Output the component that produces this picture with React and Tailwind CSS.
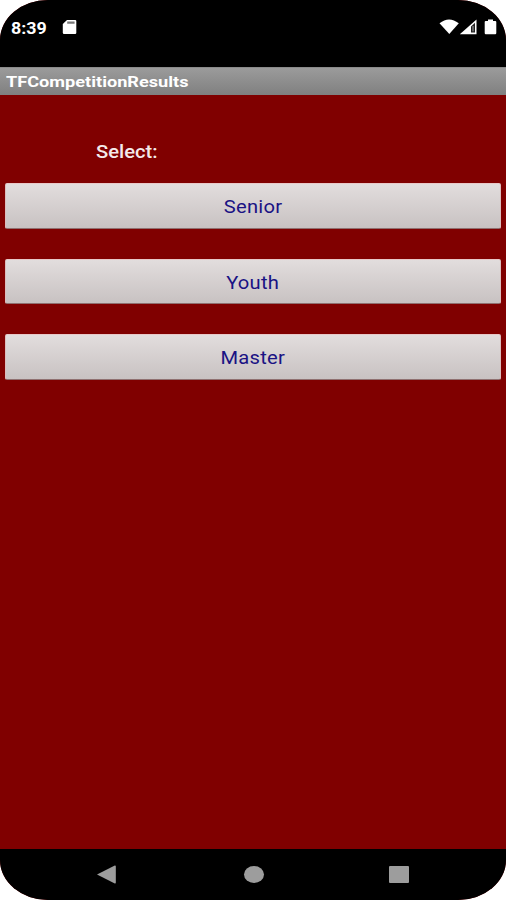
import React from "react";

const categories = ["Senior", "Youth", "Master"];

const StatusBar = () => {
  return (
    <div className="flex h-[67px] shrink-0 items-start justify-between bg-black pl-[11px] pr-[9px] pt-[18px] text-white">
      <div className="flex items-start">
        <span className="w-[51px] origin-left scale-x-[1.05] whitespace-nowrap text-[17px] font-bold leading-[20px]">8:39</span>
        <svg width="15" height="16" viewBox="0 0 15 16" className="mt-px">
          <path d="M5 1H13.2Q14.3 1 14.3 2V13.8Q14.3 15 13.2 15H2Q.8 15 .8 13.8V5Z" fill="#fff" />
          <path d="M5.2 3.6H12.6" stroke="#777" strokeWidth="2.4" />
        </svg>
      </div>

      <svg width="58" height="18" viewBox="0 0 58 18" fill="#fff">
        {/* wifi */}
        <path d="M.5 5.2Q10 -2.4 19.8 5.2L10.3 16Z" />
        {/* signal */}
        <path d="M37.5 1.5V16.2H20.8Z" />
        <path d="M32 8.4L36 4.8V14.4H32Z" fill="#222" />
        <path d="M34 8V13.4" stroke="#aaa" strokeWidth="1" />
        {/* battery */}
        <path d="M49 1.5H54V3H56.2Q57.3 3 57.3 4V15Q57.3 16.2 56.2 16.2H46.8Q45.7 16.2 45.7 15V4Q45.7 3 46.8 3H49Z" />
      </svg>
    </div>
  );
};

const NavBar = () => {
  return (
    <div className="flex h-[51px] shrink-0 items-center bg-black pl-[96px]">
      <svg width="20" height="20" viewBox="0 0 20 20" fill="#9d9d9d">
        <path d="M1 9.5L18.8 .6Q19.8 .4 19.8 1.5V17.5Q19.8 18.8 18.8 18.4Z" />
      </svg>
      <div className="ml-[128px] h-[17px] w-[20px] rounded-[50%] bg-[#9d9d9d]" />
      <div className="ml-[125px] h-[17px] w-[20px] rounded-[1px] bg-[#9d9d9d]" />
    </div>
  );
};

const App = () => {
  return (
    <div className="h-[900px] w-[506px] bg-white font-['Roboto',sans-serif]">
      <div className="flex h-full flex-col overflow-hidden rounded-[48px/40px] bg-[#800000]">
        <StatusBar />

        <div className="flex h-[28px] shrink-0 items-center border-t border-[#8a8a8a] bg-linear-to-b from-[#9b9b9b] to-[#808080] pl-[6px]">
          <h1 className="origin-left scale-x-[1.21] whitespace-nowrap text-[15px] font-bold leading-[20px] text-white">
            TFCompetitionResults
          </h1>
        </div>

        <main className="flex-1 px-[5px] pt-[46px]">
          <p className="ml-[91px] h-[42px] w-[80px] origin-left scale-x-[1.12] text-[18px] font-medium leading-[21px] text-[#f4eaea]">
            Select:
          </p>

          <div className="flex flex-col gap-[30px]">
            {categories.map((category) => (
              <button
                key={category}
                className="flex h-[45.5px] w-full items-center justify-center rounded-[2px] border border-t-[#e8c8c8] border-x-[#dcbcbc] border-b-[#8f7070] bg-linear-to-b from-[#e2dddd] to-[#c8c2c2] pt-[3px] text-[#1a1384]"
              >
                <span className="scale-x-[1.12] text-[18px] leading-[20px] tracking-[0.2px]">{category}</span>
              </button>
            ))}
          </div>
        </main>

        <NavBar />
      </div>
    </div>
  );
};

export default App;
